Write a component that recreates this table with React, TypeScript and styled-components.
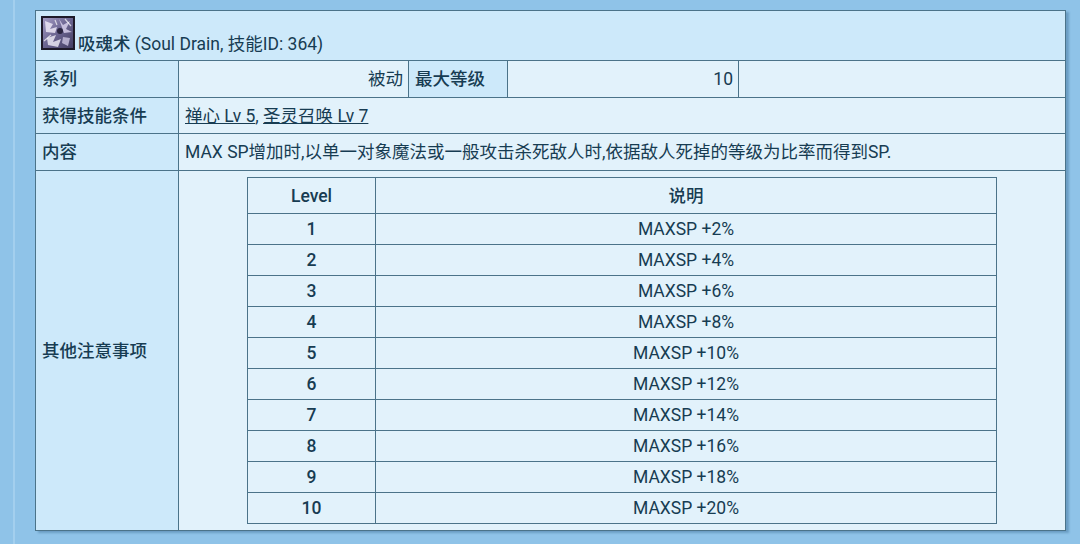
import React from 'react';
import styled, {createGlobalStyle} from 'styled-components';

const GlobalStyle = createGlobalStyle`
  html, body {
    margin: 0;
    background: #8fc3e8;
  }
  body {
    font-family: Roboto, "Noto Sans CJK SC", "Noto Sans", sans-serif;
    font-size: 17.5px;
    line-height: 22px;
    color: #173c52;
  }
`;

const Page = styled.div`
  height: 544px;
  box-sizing: border-box;
  margin-left: 13px;
  border-left: 2px solid #a3cfee;
  padding: 10px 0 0 20px;
`;

const SkillTable = styled.table`
  width: 1031px;
  border-collapse: collapse;
  border: 1px solid #4b7389;
  box-shadow: 3px 2px 2px rgba(40, 90, 130, 0.35);
  table-layout: fixed;
`;

const TitleCell = styled.td`
  background: #cde9fa;
  border: 1px solid #4b7389;
  height: 50px;
  box-sizing: border-box;
  padding: 5px 5px 0;
  vertical-align: top;
  line-height: 20px;
`;

const TitleName = styled.span`
  font-weight: 500;
  margin-left: 3px;
`;

const IconBox = styled.span`
  display: inline-block;
  width: 34px;
  height: 34px;
  vertical-align: baseline;
`;

const LabelCell = styled.td<{$h?: number}>`
  background: #cde9fa;
  border: 1px solid #4b7389;
  padding: 0 6px;
  font-weight: 500;
  height: ${p => p.$h ?? 36}px;
  box-sizing: border-box;
  white-space: nowrap;
`;

const ValueCell = styled.td<{$align?: string}>`
  background: #e2f2fb;
  border: 1px solid #4b7389;
  padding: 0 5px 0 6px;
  text-align: ${p => p.$align ?? 'left'};
`;

const SkillLink = styled.a`
  color: #173c52;
  text-decoration: underline;
`;

const NotesCell = styled.td`
  background: #e2f2fb;
  border: 1px solid #4b7389;
  padding: 6px 0;
`;

const LevelTable = styled.table`
  width: 750px;
  margin: 0 auto;
  border-collapse: collapse;
  border: 1px solid #4b7389;
`;

const LevelHead = styled.th<{$w?: number}>`
  border: 1px solid #4b7389;
  height: 36px;
  box-sizing: border-box;
  font-weight: 500;
  padding: 0;
  width: ${p => (p.$w ? `${p.$w}px` : 'auto')};
`;

const LevelCell = styled.td<{$bold?: boolean}>`
  border: 1px solid #4b7389;
  height: 31px;
  box-sizing: border-box;
  padding: 0;
  text-align: center;
  font-weight: ${p => (p.$bold ? 500 : 400)};
`;

const SkillIcon = () => (
  <svg width="34" height="34" viewBox="0 0 34 34" style={{display: 'block'}}>
    <defs>
      <linearGradient id="ic" x1="0" y1="0" x2="1" y2="1">
        <stop offset="0" stopColor="#a49cc4" />
        <stop offset="0.5" stopColor="#6a6490" />
        <stop offset="1" stopColor="#443e62" />
      </linearGradient>
    </defs>
    <rect x="0" y="0" width="34" height="34" fill="#1e1a28" />
    <rect x="2" y="2" width="30" height="30" fill="url(#ic)" />
    <path d="M4 5 L12 8 L9 13 L16 11 L14 17 L5 16 Z" fill="#ece8f6" opacity="0.85" />
    <path d="M18 3 L22 9 L29 5 L25 13 L31 16 L23 17 Z" fill="#ddd6f0" opacity="0.8" />
    <path d="M6 22 L15 19 L12 26 L20 23 L17 31 L7 29 Z" fill="#f2f0f9" opacity="0.8" />
    <path d="M22 21 L29 22 L27 30 L21 27 Z" fill="#d3cce8" opacity="0.75" />
    <circle cx="19" cy="15" r="3" fill="#2a2540" />
    <path d="M3 25 L10 19 M24 3 L30 10 M14 4 L16 9" stroke="#ffffff" strokeWidth="1.2" opacity="0.7" />
  </svg>
);

const LEVELS = [2, 4, 6, 8, 10, 12, 14, 16, 18, 20];

const App = () => {
  return (
    <>
      <GlobalStyle />
      <Page>
        <SkillTable>
          <colgroup>
            <col style={{width: 143}} />
            <col style={{width: 230}} />
            <col style={{width: 99}} />
            <col style={{width: 231}} />
            <col />
          </colgroup>
          <tbody>
            <tr>
              <TitleCell colSpan={5}>
                <IconBox>
                  <SkillIcon />
                </IconBox>
                <TitleName>吸魂术</TitleName> (Soul Drain, 技能ID: 364)
              </TitleCell>
            </tr>
            <tr>
              <LabelCell $h={37}>系列</LabelCell>
              <ValueCell $align="right">被动</ValueCell>
              <LabelCell>最大等级</LabelCell>
              <ValueCell $align="right">10</ValueCell>
              <ValueCell />
            </tr>
            <tr>
              <LabelCell>获得技能条件</LabelCell>
              <ValueCell colSpan={4}>
                <SkillLink href="#">禅心 Lv 5</SkillLink>, <SkillLink href="#">圣灵召唤 Lv 7</SkillLink>
              </ValueCell>
            </tr>
            <tr>
              <LabelCell $h={37}>内容</LabelCell>
              <ValueCell colSpan={4}>
                MAX SP增加时,以单一对象魔法或一般攻击杀死敌人时,依据敌人死掉的等级为比率而得到SP.
              </ValueCell>
            </tr>
            <tr>
              <LabelCell $h={358}>其他注意事项</LabelCell>
              <NotesCell colSpan={4}>
                <LevelTable>
                  <thead>
                    <tr>
                      <LevelHead $w={128}>Level</LevelHead>
                      <LevelHead>说明</LevelHead>
                    </tr>
                  </thead>
                  <tbody>
                    {LEVELS.map((v, i) => (
                      <tr key={i}>
                        <LevelCell $bold>{i + 1}</LevelCell>
                        <LevelCell>MAXSP +{v}%</LevelCell>
                      </tr>
                    ))}
                  </tbody>
                </LevelTable>
              </NotesCell>
            </tr>
          </tbody>
        </SkillTable>
      </Page>
    </>
  );
};

export default App;
